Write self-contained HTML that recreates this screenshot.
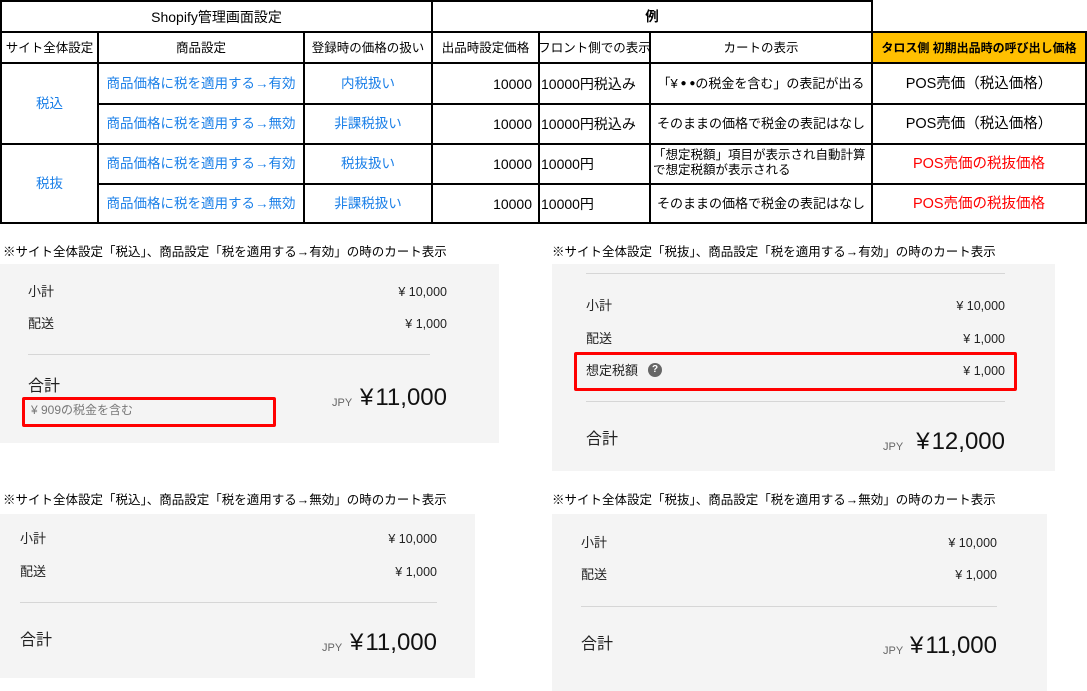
<!DOCTYPE html>
<html><head><meta charset="utf-8"><style>
*{margin:0;padding:0;box-sizing:border-box}
body{width:1087px;height:691px;background:#fff;position:relative;overflow:hidden;font-family:"Liberation Sans","Noto Sans CJK JP",sans-serif;color:#000}
.a{position:absolute;white-space:nowrap}
.h{position:absolute;background:#000;height:2px}
.v{position:absolute;background:#000;width:2px}
.c{position:absolute;display:flex;align-items:center;justify-content:center;font-size:13.5px;line-height:14px;white-space:nowrap}
.b{color:#1a7fe8}
.r{color:#f00;font-size:14.5px}
.cap{position:absolute;font-size:12.5px;white-space:nowrap}
.p{position:absolute;background:#f4f4f4}
.t{position:absolute;font-size:13px;color:#222;white-space:nowrap;line-height:16px}
.rt{position:absolute;font-size:12.5px;color:#222;text-align:right;white-space:nowrap;line-height:16px}
.ln{position:absolute;height:1px;background:#d6d6d6}
.big{position:absolute;font-size:24px;color:#111;white-space:nowrap;text-align:right;line-height:28px}
.jpy{position:absolute;font-size:11px;color:#666;line-height:12px}
.box{position:absolute;border:3px solid #f00;border-radius:2px}
</style></head><body>
<div class="h" style="left:0;top:0;width:873px"></div>
<div class="h" style="left:0;top:31px;width:1087px"></div>
<div class="h" style="left:0;top:62px;width:1087px"></div>
<div class="h" style="left:97px;top:103px;width:990px"></div>
<div class="h" style="left:0;top:143px;width:1087px"></div>
<div class="h" style="left:97px;top:183px;width:990px"></div>
<div class="h" style="left:0;top:222px;width:1087px"></div>
<div class="v" style="left:0;top:0;height:224px"></div>
<div class="v" style="left:97px;top:31px;height:193px"></div>
<div class="v" style="left:303px;top:31px;height:193px"></div>
<div class="v" style="left:431px;top:0;height:224px"></div>
<div class="v" style="left:538px;top:31px;height:193px"></div>
<div class="v" style="left:649px;top:31px;height:193px"></div>
<div class="v" style="left:871px;top:0;height:224px"></div>
<div class="v" style="left:1085px;top:31px;height:193px"></div>
<div style="position:absolute;left:873px;top:33px;width:212px;height:29px;background:#ffc000"></div>
<div class="c" style="left:2px;top:2px;width:429px;height:29px;font-size:14px">Shopify管理画面設定</div>
<div class="c" style="left:433px;top:2px;width:438px;height:29px;font-weight:bold">例</div>
<div class="c" style="left:2px;top:33px;width:95px;height:29px;font-size:12.5px">サイト全体設定</div>
<div class="c" style="left:99px;top:33px;width:204px;height:29px;font-size:12.5px">商品設定</div>
<div class="c" style="left:305px;top:33px;width:126px;height:29px;font-size:12.5px">登録時の価格の扱い</div>
<div class="c" style="left:433px;top:33px;width:105px;height:29px;font-size:12.5px">出品時設定価格</div>
<div class="c" style="left:540px;top:33px;width:109px;height:29px;font-size:12.5px">フロント側での表示</div>
<div class="c" style="left:651px;top:33px;width:220px;height:29px;font-size:12.5px">カートの表示</div>
<div class="c" style="left:873px;top:33px;width:212px;height:29px;font-size:12px;font-weight:bold">タロス側 初期出品時の呼び出し価格</div>
<div class="c b" style="left:2px;top:64px;width:95px;height:79px">税込</div>
<div class="c b" style="left:2px;top:145px;width:95px;height:77px">税抜</div>
<div class="c b" style="left:99px;top:64px;width:204px;height:39px">商品価格に税を適用する→有効</div>
<div class="c b" style="left:99px;top:105px;width:204px;height:38px">商品価格に税を適用する→無効</div>
<div class="c b" style="left:99px;top:145px;width:204px;height:38px">商品価格に税を適用する→有効</div>
<div class="c b" style="left:99px;top:185px;width:204px;height:37px">商品価格に税を適用する→無効</div>
<div class="c b" style="left:305px;top:64px;width:126px;height:39px">内税扱い</div>
<div class="c b" style="left:305px;top:105px;width:126px;height:38px">非課税扱い</div>
<div class="c b" style="left:305px;top:145px;width:126px;height:38px">税抜扱い</div>
<div class="c b" style="left:305px;top:185px;width:126px;height:37px">非課税扱い</div>
<div class="c" style="left:433px;top:64px;width:99px;height:39px;justify-content:flex-end;font-size:14px">10000</div>
<div class="c" style="left:433px;top:105px;width:99px;height:38px;justify-content:flex-end;font-size:14px">10000</div>
<div class="c" style="left:433px;top:145px;width:99px;height:38px;justify-content:flex-end;font-size:14px">10000</div>
<div class="c" style="left:433px;top:185px;width:99px;height:37px;justify-content:flex-end;font-size:14px">10000</div>
<div class="c" style="left:541px;top:64px;width:108px;height:39px;justify-content:flex-start;font-size:14px">10000円税込み</div>
<div class="c" style="left:541px;top:105px;width:108px;height:38px;justify-content:flex-start;font-size:14px">10000円税込み</div>
<div class="c" style="left:541px;top:145px;width:108px;height:38px;justify-content:flex-start;font-size:14px">10000円</div>
<div class="c" style="left:541px;top:185px;width:108px;height:37px;justify-content:flex-start;font-size:14px">10000円</div>
<div class="c" style="left:651px;top:64px;width:220px;height:39px;font-size:13px">「¥<span style="font-size:10px">&nbsp;●&nbsp;●</span>の税金を含む」の表記が出る</div>
<div class="c" style="left:651px;top:105px;width:220px;height:38px;font-size:13px">そのままの価格で税金の表記はなし</div>
<div class="a" style="left:653px;top:148px;font-size:12.5px;line-height:15px">「想定税額」項目が表示され自動計算<br>で想定税額が表示される</div>
<div class="c" style="left:651px;top:185px;width:220px;height:37px;font-size:13px">そのままの価格で税金の表記はなし</div>
<div class="c" style="left:873px;top:64px;width:212px;height:39px;font-size:14.5px">POS売価（税込価格）</div>
<div class="c" style="left:873px;top:105px;width:212px;height:38px;font-size:14.5px">POS売価（税込価格）</div>
<div class="c r" style="left:873px;top:145px;width:212px;height:38px">POS売価の税抜価格</div>
<div class="c r" style="left:873px;top:185px;width:212px;height:37px">POS売価の税抜価格</div>

<div class="cap" style="left:3px;top:241px">※サイト全体設定「税込」、商品設定「税を適用する→有効」の時のカート表示</div>
<div class="p" style="left:0;top:264px;width:499px;height:179px"></div>
<div class="t" style="left:28px;top:284px">小計</div>
<div class="rt" style="right:640px;top:284px">¥ 10,000</div>
<div class="t" style="left:28px;top:316px">配送</div>
<div class="rt" style="right:640px;top:316px">¥ 1,000</div>
<div class="ln" style="left:28px;top:354px;width:402px"></div>
<div class="t" style="left:28px;top:378px;font-size:16px;line-height:18px">合計</div>
<div class="t" style="left:31px;top:402px;font-size:12px;color:#777">¥ 909の税金を含む</div>
<div class="jpy" style="left:332px;top:397px">JPY</div>
<div class="big" style="right:640px;top:384px">¥&#8202;11,000</div>
<div class="box" style="left:22px;top:397px;width:254px;height:30px"></div>

<div class="cap" style="left:552px;top:241px">※サイト全体設定「税抜」、商品設定「税を適用する→有効」の時のカート表示</div>
<div class="p" style="left:552px;top:264px;width:503px;height:207px"></div>
<div class="ln" style="left:586px;top:273px;width:419px"></div>
<div class="t" style="left:586px;top:298px">小計</div>
<div class="rt" style="right:82px;top:298px">¥ 10,000</div>
<div class="t" style="left:586px;top:331px">配送</div>
<div class="rt" style="right:82px;top:331px">¥ 1,000</div>
<div class="t" style="left:586px;top:363px">想定税額</div>
<div class="a" style="left:648px;top:363px;width:14px;height:14px;border-radius:50%;background:#666;color:#fff;font-size:10px;font-weight:bold;text-align:center;line-height:14px">?</div>
<div class="rt" style="right:82px;top:363px">¥ 1,000</div>
<div class="box" style="left:574px;top:352px;width:443px;height:39px"></div>
<div class="ln" style="left:586px;top:401px;width:419px"></div>
<div class="t" style="left:586px;top:431px;font-size:16px;line-height:18px">合計</div>
<div class="jpy" style="left:883px;top:441px">JPY</div>
<div class="big" style="right:50px;top:428px;right:82px">¥&#8202;12,000</div>

<div class="cap" style="left:3px;top:489px">※サイト全体設定「税込」、商品設定「税を適用する→無効」の時のカート表示</div>
<div class="p" style="left:0;top:514px;width:475px;height:164px"></div>
<div class="t" style="left:20px;top:531px">小計</div>
<div class="rt" style="right:650px;top:531px">¥ 10,000</div>
<div class="t" style="left:20px;top:564px">配送</div>
<div class="rt" style="right:650px;top:564px">¥ 1,000</div>
<div class="ln" style="left:20px;top:602px;width:417px"></div>
<div class="t" style="left:20px;top:632px;font-size:16px;line-height:18px">合計</div>
<div class="jpy" style="left:322px;top:642px">JPY</div>
<div class="big" style="right:650px;top:629px">¥&#8202;11,000</div>

<div class="cap" style="left:552px;top:489px">※サイト全体設定「税抜」、商品設定「税を適用する→無効」の時のカート表示</div>
<div class="p" style="left:552px;top:514px;width:495px;height:177px"></div>
<div class="t" style="left:581px;top:535px">小計</div>
<div class="rt" style="right:90px;top:535px">¥ 10,000</div>
<div class="t" style="left:581px;top:567px">配送</div>
<div class="rt" style="right:90px;top:567px">¥ 1,000</div>
<div class="ln" style="left:581px;top:606px;width:416px"></div>
<div class="t" style="left:581px;top:636px;font-size:16px;line-height:18px">合計</div>
<div class="jpy" style="left:883px;top:645px">JPY</div>
<div class="big" style="right:90px;top:632px">¥&#8202;11,000</div>
</body></html>
